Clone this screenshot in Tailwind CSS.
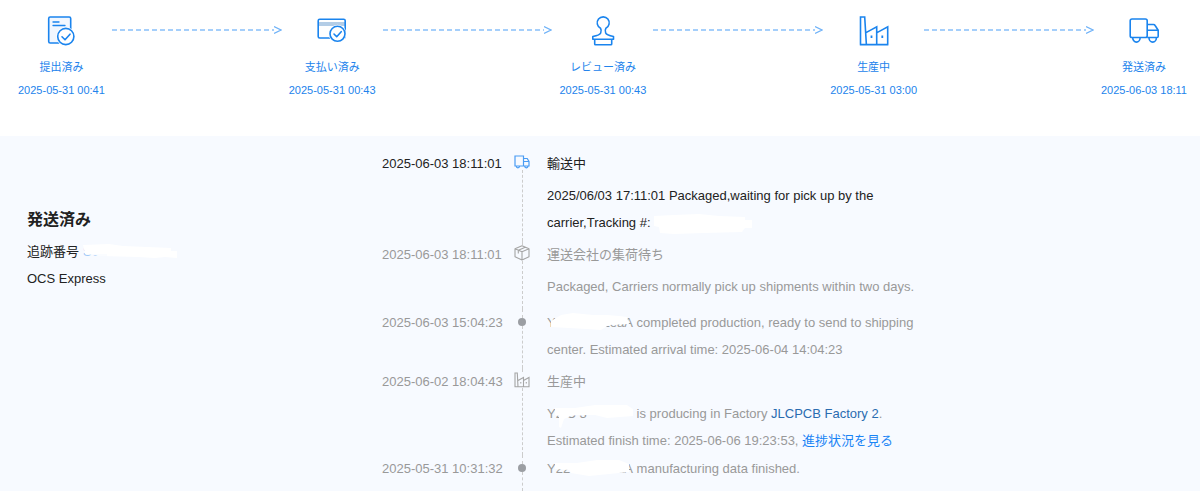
<!DOCTYPE html>
<html lang="ja">
<head>
    <meta charset="UTF-8">
    <meta name="viewport" content="width=device-width, initial-scale=1.0">
    <title>発送済み</title>
    <script src="https://cdn.jsdelivr.net/npm/@tailwindcss/browser@4"></script>
</head>
<body class="min-h-screen bg-white font-['Liberation_Sans','Noto_Sans_CJK_JP',sans-serif] text-[13px] text-[#222]">
    <!-- Shared icons -->
    <svg class="hidden">
        <symbol id="arrow" viewBox="0 0 8 10"><path d="M0 1.5L7 5L0 8.5" fill="none" stroke="#6fb2f8" stroke-width="1.2"/></symbol>
    </svg>

    <!-- Order steps -->
    <header class="pt-[14px] pb-[34px] pl-[18px] pr-[13px]">
        <ol class="flex items-start text-[11px] leading-[23px] text-[#2283ec] text-center whitespace-nowrap">
            <li>
                <svg class="mx-auto mb-[10px] size-8" viewBox="0 0 32 32" fill="none" stroke="#1a84ee" stroke-width="1.6" stroke-linecap="round" stroke-linejoin="round">
                    <rect x="3.7" y="3" width="22" height="26" rx="1.5" fill="#f1f7ff"/>
                    <path d="M8 8h6M8 11.5h12" stroke-width="1.3"/>
                    <circle cx="20.8" cy="22.5" r="9.6" fill="#fff" stroke="none"/>
                    <circle cx="20.8" cy="22.5" r="8.1" fill="#fff"/>
                    <path d="M17 22.8l3 3 5-5.6"/>
                </svg>
                <p>提出済み</p>
                <time>2025-05-31 00:41</time>
            </li>
            <li class="flex flex-1 items-center h-8 mx-[7px]" aria-hidden="true">
                <span class="flex-1 h-[2px] bg-[repeating-linear-gradient(90deg,#a5cffb_0_5px,transparent_5px_8px)]"></span>
                <svg class="w-2 h-[10px]"><use href="#arrow"/></svg>
            </li>
            <li>
                <svg class="mx-auto mb-[10px] size-8" viewBox="0 0 32 32" fill="none" stroke="#1a84ee" stroke-width="1.6" stroke-linecap="round" stroke-linejoin="round">
                    <path d="M2.5 8h26.5v4H2.5z" fill="#b4cde6" stroke="none"/>
                    <rect x="2.2" y="5.2" width="27" height="18.8" rx="1.5"/>
                    <circle cx="21.5" cy="19.8" r="9" fill="#fff" stroke="none"/>
                    <circle cx="21.5" cy="19.8" r="7.5" fill="#fff"/>
                    <path d="M18 20l2.7 2.7 4.5-5"/>
                </svg>
                <p>支払い済み</p>
                <time>2025-05-31 00:43</time>
            </li>
            <li class="flex flex-1 items-center h-8 mx-[7px]" aria-hidden="true">
                <span class="flex-1 h-[2px] bg-[repeating-linear-gradient(90deg,#a5cffb_0_5px,transparent_5px_8px)]"></span>
                <svg class="w-2 h-[10px]"><use href="#arrow"/></svg>
            </li>
            <li>
                <svg class="mx-auto mb-[10px] size-8" viewBox="0 0 32 32" fill="none" stroke="#1a84ee" stroke-width="1.6" stroke-linejoin="round">
                    <path d="M13.5 14.2a6 6 0 1 1 5.4 0c-.8 1.3-.8 3.3-.2 4.8.7 2 3.5 2.7 7.8 3.5V25.3H5.8V22.5c4.3-.8 7.1-1.5 7.9-3.5.6-1.5.6-3.5-.2-4.8z"/>
                    <path d="M7.7 25.3v4.7q0 .8.8.8h15.4q.8 0 .8-.8v-4.7"/>
                </svg>
                <p>レビュー済み</p>
                <time>2025-05-31 00:43</time>
            </li>
            <li class="flex flex-1 items-center h-8 mx-[7px]" aria-hidden="true">
                <span class="flex-1 h-[2px] bg-[repeating-linear-gradient(90deg,#a5cffb_0_5px,transparent_5px_8px)]"></span>
                <svg class="w-2 h-[10px]"><use href="#arrow"/></svg>
            </li>
            <li>
                <svg class="mx-auto mb-[10px] size-8" viewBox="0 0 32 32" fill="none" stroke="#1a84ee" stroke-width="1.6">
                    <path d="M2.5 30.8V3h4.2l1.7 27.8M8 18.6l10.7-5.8v18M19 18.6l10.7-5.8v18M1.8 30.6h28.6"/>
                    <path d="M13.5 21.5v2.6M24.3 21.5v2.6" stroke-width="1.8"/>
                </svg>
                <p>生産中</p>
                <time>2025-05-31 03:00</time>
            </li>
            <li class="flex flex-1 items-center h-8 mx-[7px]" aria-hidden="true">
                <span class="flex-1 h-[2px] bg-[repeating-linear-gradient(90deg,#a5cffb_0_5px,transparent_5px_8px)]"></span>
                <svg class="w-2 h-[10px]"><use href="#arrow"/></svg>
            </li>
            <li>
                <svg class="mx-auto mb-[10px] size-8" viewBox="0 0 32 32" fill="none" stroke="#1a84ee" stroke-width="1.6" stroke-linejoin="round">
                    <rect x="2.2" y="5" width="17" height="18.5" rx="1.8"/>
                    <path d="M19.2 10.5h6.3q1 0 1.6 1l3.1 4.7v6q0 1.3-1.3 1.3h-9.7M19.2 16.2h11"/>
                    <path d="M4.7 23.8a3.7 4.3 0 0 0 7.4 0M21 23.8a3.7 4.3 0 0 0 7.4 0"/>
                </svg>
                <p>発送済み</p>
                <time>2025-06-03 18:11</time>
            </li>
        </ol>
    </header>

    <!-- Shipment detail -->
    <main class="flex bg-[#f7faff] leading-[27px]">
        <section class="w-[382px] shrink-0 pl-[27px] pt-[70px]">
            <h1 class="text-base leading-[27px] font-bold mb-[5px]">発送済み</h1>
            <p class="flex">追跡番号
                <span class="relative ml-1 w-[94px] text-[#2283ec]">S07
                    <svg class="absolute left-0 top-[6px] w-[94px] h-4" viewBox="0 0 94 16" fill="#fff">
                        <path d="M0 1L26 0L40 2L88 4V7H94V14L82 13L72 14L55 13L18 12L2 10Z"/>
                        <path d="M0 10h24v3H0z" fill="#f7faff" opacity=".6"/>
                    </svg>
                </span>
            </p>
            <p>OCS Express</p>
        </section>

        <ol class="flex-1 pt-[14px] text-[#999]">
            <li class="flex">
                <time class="w-[120px] shrink-0 whitespace-nowrap text-[#222]">2025-06-03 18:11:01</time>
                <div class="flex flex-col items-center w-10 mr-[5px] shrink-0">
                    <svg class="mt-1 size-4 shrink-0" viewBox="0 0 16 16" fill="none" stroke="#4a9cf3" stroke-width="1.2">
                        <path d="M1 2h8.5v10H1zM9.5 4.5h3.7l1.8 3V12H9.5M9.5 7.5H15"/>
                        <path d="M2.3 12a1.6 1.8 0 0 0 3.2 0M10.7 12a1.6 1.8 0 0 0 3.2 0"/>
                    </svg>
                    <span class="flex-1 border-l border-dashed border-[#ccc]"></span>
                </div>
                <div class="max-w-[375px] pb-[5px] text-[#222]">
                    <h2 class="mb-[5px]">輸送中</h2>
                    <p>2025/06/03 17:11:01 Packaged,waiting for pick up by the carrier,Tracking #:
                        <svg class="inline-block w-[99px] h-5 align-middle" viewBox="0 0 99 20" fill="#fff">
                            <path d="M0 2L20 1L45 0L65 2L91 3V6H98V14H91L88 18L50 19L20 20L6 19L5 13L0 12Z"/>
                        </svg>
                    </p>
                </div>
            </li>
            <li class="flex">
                <time class="w-[120px] shrink-0 whitespace-nowrap">2025-06-03 18:11:01</time>
                <div class="flex flex-col items-center w-10 mr-[5px] shrink-0">
                    <span class="h-1 border-l border-dashed border-[#ccc]"></span>
                    <svg class="size-4 shrink-0" viewBox="0 0 16 16" fill="none" stroke="#a5a5a5" stroke-width="1.1" stroke-linejoin="round">
                        <path d="M8 .8l7 3v8L8 15l-7-3.2v-8zM1 3.8l7 3 7-3M8 6.8V15M4.3 5.2l7-3M4.3 5.2v3.3"/>
                    </svg>
                    <span class="flex-1 border-l border-dashed border-[#ccc]"></span>
                </div>
                <div class="max-w-[375px] pb-[9px]">
                    <h2 class="mb-[5px]">運送会社の集荷待ち</h2>
                    <p>Packaged, Carriers normally pick up shipments within two days.</p>
                </div>
            </li>
            <li class="flex">
                <time class="w-[120px] shrink-0 whitespace-nowrap">2025-06-03 15:04:23</time>
                <div class="flex flex-col items-center w-10 mr-[5px] shrink-0">
                    <span class="h-[9px] border-l border-dashed border-[#ccc]"></span>
                    <span class="size-2 rounded-full bg-[#9b9ea3]"></span>
                    <span class="flex-1 border-l border-dashed border-[#ccc]"></span>
                </div>
                <div class="max-w-[375px] pb-[5px]">
                    <p>
                        <span class="relative inline-flex justify-between w-[86px]"><span>Y8</span><span>2eaA</span>
                            <svg class="absolute left-0 top-1 w-[86px] h-[18px]" viewBox="0 0 86 18" fill="#fff">
                                <path d="M4 8L14 2L26 0L46 2L60 2L72 3L80 4L82 11L62 12L54 17L40 16L4 14Z"/>
                            </svg>
                        </span>
                        completed production, ready to send to shipping center. Estimated arrival time: 2025-06-04 14:04:23
                    </p>
                </div>
            </li>
            <li class="flex">
                <time class="w-[120px] shrink-0 whitespace-nowrap">2025-06-02 18:04:43</time>
                <div class="flex flex-col items-center w-10 mr-[5px] shrink-0">
                    <span class="h-1 border-l border-dashed border-[#ccc]"></span>
                    <svg class="size-4 shrink-0" viewBox="0 0 16 16" fill="none" stroke="#a5a5a5" stroke-width="1.1">
                        <path d="M1 15V1h2.3l.7 14M4 8.5L9.5 5.5V15M9.5 8.5L15 5.5V15M.5 14.7h15M6.8 10v1.5M12.3 10v1.5"/>
                    </svg>
                    <span class="flex-1 border-l border-dashed border-[#ccc]"></span>
                </div>
                <div class="max-w-[375px] pb-px">
                    <h2 class="mb-[5px]">生産中</h2>
                    <p>
                        <span class="relative inline-block w-[86px]">Y2 C 3
                            <svg class="absolute left-0 top-1 w-[86px] h-6" viewBox="0 0 86 24" fill="#fff">
                                <path d="M8 4L28 4L48 1L80 1L86 5V12L60 14L48 11L26 11L17 15L14 24L12 23L12 12L8 11Z"/>
                            </svg>
                        </span>
                        is producing in Factory <a href="#" class="text-[#2a6cb0]">JLCPCB Factory 2</a>.
                    </p>
                    <p>Estimated finish time: 2025-06-06 19:23:53, <a href="#" class="text-[#1a84f5]">進捗状況を見る</a></p>
                </div>
            </li>
            <li class="flex">
                <time class="w-[120px] shrink-0 whitespace-nowrap">2025-05-31 10:31:32</time>
                <div class="flex flex-col items-center w-10 mr-[5px] shrink-0">
                    <span class="h-[9px] border-l border-dashed border-[#ccc]"></span>
                    <span class="size-2 rounded-full bg-[#9b9ea3]"></span>
                    <span class="flex-1 border-l border-dashed border-[#ccc]"></span>
                </div>
                <div class="max-w-[375px] pb-[9px]">
                    <p>
                        <span class="relative inline-flex justify-between w-[86px]"><span>Y22</span><span>eaA</span>
                            <svg class="absolute left-0 top-1 w-[86px] h-[18px]" viewBox="0 0 86 18" fill="#fff">
                                <path d="M8 4L30 4L50 1L72 1L82 5L82 13L62 15L42 17L24 14L22 11L8 10Z"/>
                            </svg>
                        </span>
                        manufacturing data finished.
                    </p>
                </div>
            </li>
        </ol>
    </main>
</body>
</html>
